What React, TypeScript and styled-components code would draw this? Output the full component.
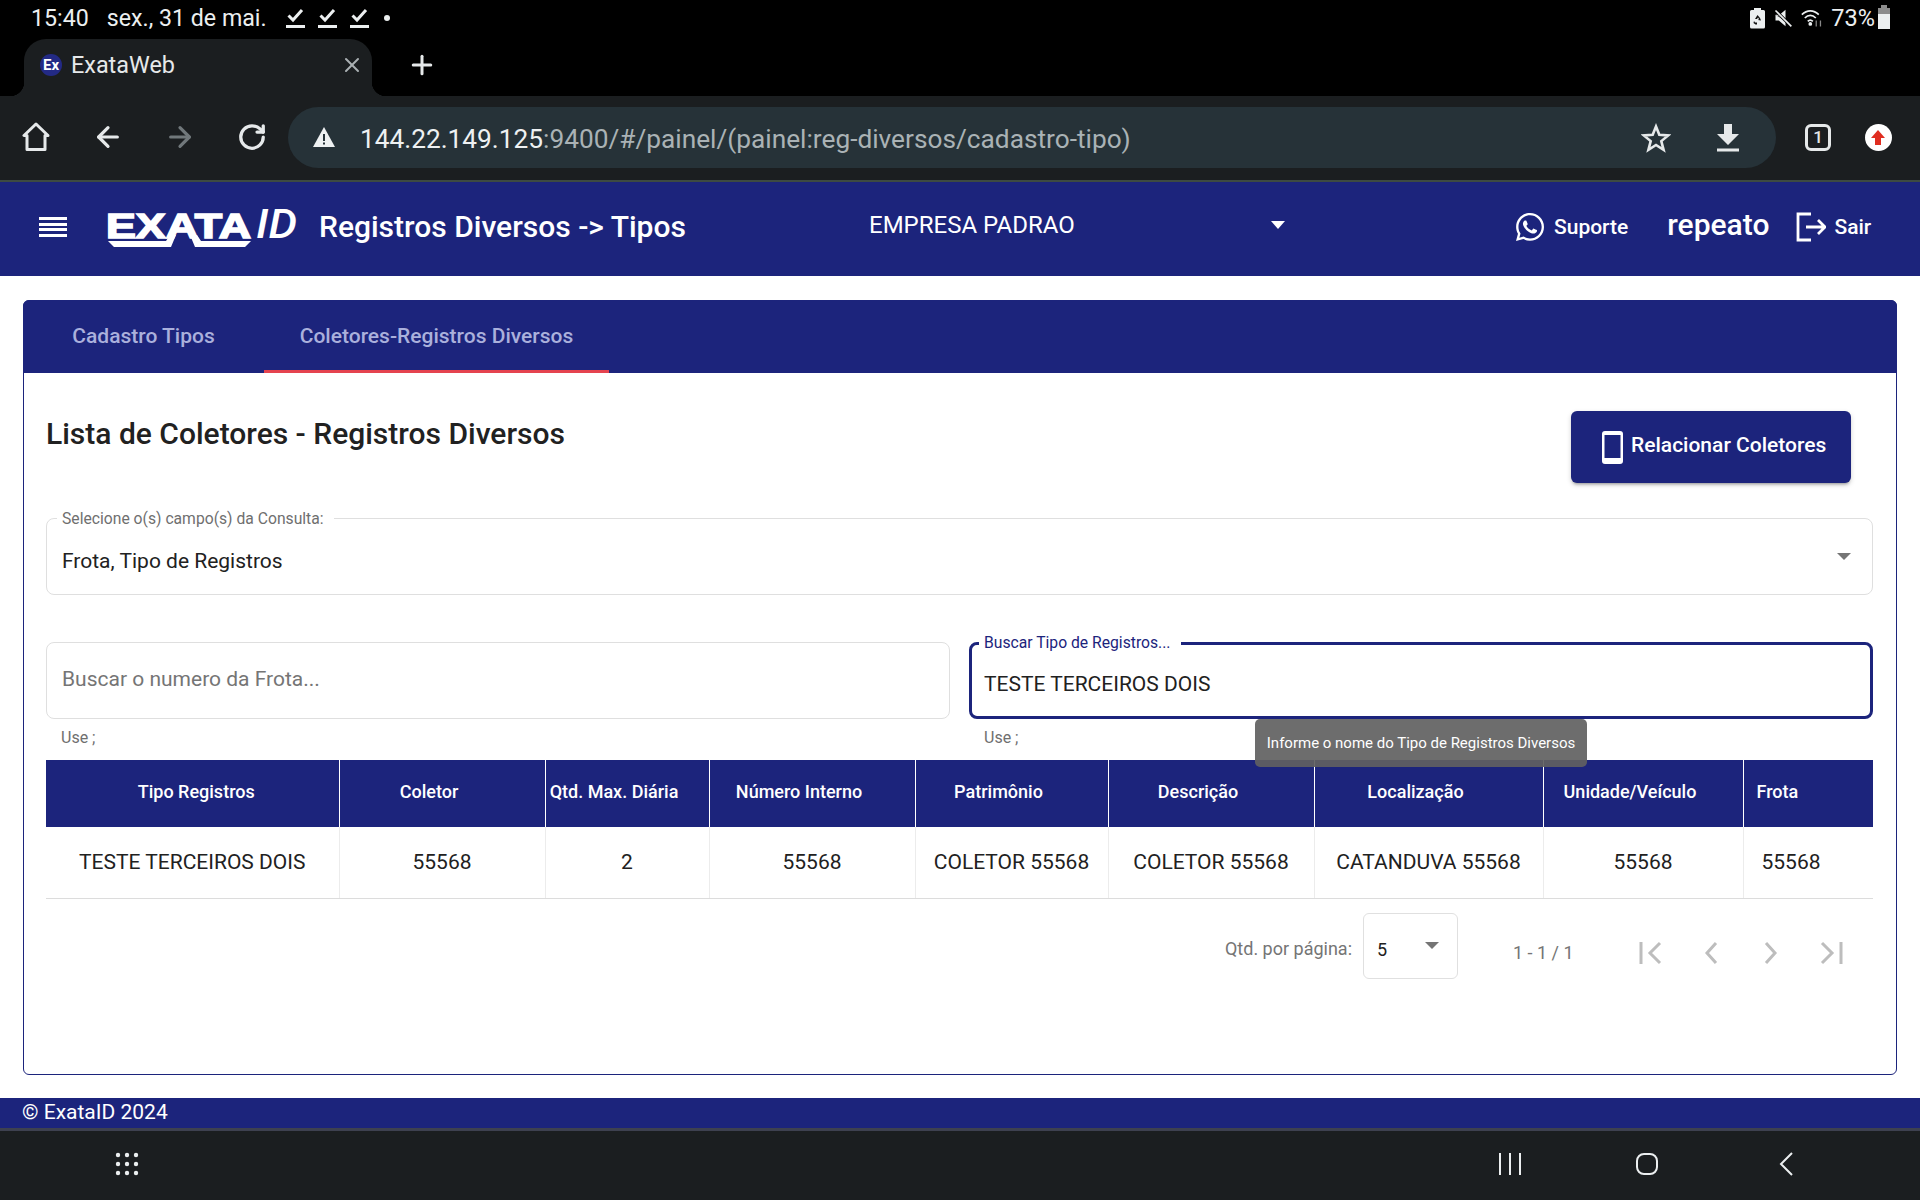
import React from "react";
import styled, { createGlobalStyle } from "styled-components";
import { FaWhatsapp } from "react-icons/fa";
import { ArrowLeft, ArrowRight, Plus, RotateCw, X } from "lucide-react";

const NAVY = "#1c247c";
const CHROME = "#1b1e20";

const GlobalStyle = createGlobalStyle`
  html, body {
    margin: 0;
    padding: 0;
    background: #fff;
    font-family: Roboto, "Liberation Sans", sans-serif;
  }
  * { box-sizing: border-box; }
`;

const Page = styled.div`
  width: 1920px;
  height: 1200px;
  display: flex;
  flex-direction: column;
  overflow: hidden;
`;

const StatusBar = styled.div`
  height: 39px;
  background: #000;
  color: #eceff0;
  display: flex;
  align-items: center;
  padding: 0 30px 4px 31px;
  font-size: 23.2px;
`;

const StatusDate = styled.span`
  margin: 0 19px 0 18px;
`;

const StatusChecks = styled.div`
  display: flex;
  align-items: center;
  gap: 13px;
`;

const StatusDot = styled.span`
  width: 6px;
  height: 6px;
  border-radius: 50%;
  background: #eceff0;
  margin-left: 15px;
`;

const StatusRight = styled.div`
  margin-left: auto;
  display: flex;
  align-items: center;
  gap: 8px;
`;

const StatusPercent = styled.span`
  font-size: 23.5px;
  margin-right: -5px;
`;

const TabStrip = styled.div`
  height: 57px;
  background: #000;
  display: flex;
  align-items: stretch;
  padding-left: 24px;
`;

const BrowserTab = styled.div`
  position: relative;
  width: 348px;
  background: ${CHROME};
  border-radius: 22px 22px 0 0;
  display: flex;
  align-items: center;
  padding: 0 8px 6px 16px;
  color: #e6e9ea;
  font-size: 23.4px;

  &::before,
  &::after {
    content: "";
    position: absolute;
    bottom: 0;
    width: 14px;
    height: 14px;
  }
  &::before {
    left: -14px;
    background: radial-gradient(circle at 0 0, #000 14px, ${CHROME} 14.5px);
  }
  &::after {
    right: -14px;
    background: radial-gradient(circle at 100% 0, #000 14px, ${CHROME} 14.5px);
  }
`;

const Favicon = styled.span`
  width: 22px;
  height: 22px;
  border-radius: 50%;
  background: #232a85;
  color: #fff;
  font-size: 15px;
  font-weight: 700;
  display: flex;
  align-items: center;
  justify-content: center;
  margin-right: 9px;
`;

const TabTitle = styled.span`
  flex: 1;
`;

const NewTab = styled.div`
  display: flex;
  align-items: center;
  margin: -6px 0 0 35px;
  color: #e6e9ea;
`;

const Toolbar = styled.div`
  height: 86px;
  background: ${CHROME};
  border-bottom: 2px solid #3d4a42;
  display: flex;
  align-items: center;
  padding-bottom: 2px;
`;

const ToolButton = styled.div<{ $width: number; $shift?: number }>`
  width: ${(p) => p.$width}px;
  padding-left: ${(p) => p.$shift ?? 0}px;
  display: flex;
  justify-content: center;
  align-items: center;
  flex-shrink: 0;
`;

const UrlPill = styled.div`
  width: 1488px;
  height: 61px;
  margin-left: 5px;
  border-radius: 31px;
  background: #263238;
  display: flex;
  align-items: center;
  padding: 0 36px 0 24px;
  font-size: 26.25px;
  color: #aab2b5;
`;

const UrlHost = styled.span`
  color: #eef1f2;
`;

const UrlText = styled.div`
  margin: 3px 0 0 24px;
  flex: 1;
  white-space: nowrap;
`;

const UrlActions = styled.div`
  display: flex;
  align-items: center;
  gap: 45px;
  margin-top: 1px;
`;

const TabCount = styled.div`
  width: 26px;
  height: 27px;
  border: 3px solid #e6e9ea;
  border-radius: 6px;
  color: #e6e9ea;
  font-size: 17px;
  font-weight: 500;
  display: flex;
  align-items: center;
  justify-content: center;
`;

const UpdateBadge = styled.div`
  width: 27px;
  height: 27px;
  margin-top: 1px;
  border-radius: 50%;
  background: #fff;
  display: flex;
  align-items: center;
  justify-content: center;
`;

const AppHeader = styled.header`
  height: 94px;
  background: ${NAVY};
  color: #fff;
  display: flex;
  align-items: center;
  padding: 0 0 4px 39px;
`;

const MenuIcon = styled.div`
  width: 28px;
  height: 20px;
  display: flex;
  flex-direction: column;
  justify-content: space-between;
  margin-right: 39px;

  span {
    height: 3px;
    background: #fff;
  }
`;

const LogoBox = styled.div`
  width: 190px;
  height: 52px;
  margin-right: 23px;
`;

const HeaderTitle = styled.div`
  width: 550px;
  margin-top: -1px;
  font-size: 30px;
  font-weight: 500;
`;

const CompanySelect = styled.div`
  width: 416px;
  display: flex;
  align-items: center;
  justify-content: space-between;
  font-size: 24px;
  margin-top: -4px;
`;

const HeaderLinks = styled.div`
  margin-left: 229px;
  display: flex;
  align-items: center;
`;

const HeaderLink = styled.div`
  display: flex;
  align-items: center;
  font-size: 21px;
  font-weight: 500;
  gap: 8px;
`;

const UserName = styled.div`
  font-size: 30px;
  font-weight: 500;
  margin: -6px 27px 0 39px;
`;

const Main = styled.main`
  flex: 1;
  background: #fff;
  padding: 24px 23px 23px;
  display: flex;
`;

const Card = styled.section`
  flex: 1;
  border: 1px solid ${NAVY};
  border-radius: 6px;
  display: flex;
  flex-direction: column;
`;

const TabBar = styled.div`
  height: 73px;
  margin: -1px -1px 0;
  background: ${NAVY};
  border-radius: 6px 6px 0 0;
  display: flex;
`;

const TabItem = styled.div<{ $active?: boolean; $width: number }>`
  width: ${(p) => p.$width}px;
  display: flex;
  align-items: center;
  justify-content: center;
  padding-top: 2px;
  border-bottom: 3px solid ${(p) => (p.$active ? "#e5434f" : "transparent")};
  color: #aab0dc;
  font-size: 21px;
  font-weight: 500;
`;

const CardBody = styled.div`
  padding: 38px 23px 0 22px;
  position: relative;
`;

const TitleRow = styled.div`
  height: 72px;
  display: flex;
  justify-content: space-between;
  padding-right: 22px;
`;

const Title = styled.h2`
  margin: 3px 0 0;
  font-size: 30px;
  line-height: 40px;
  font-weight: 500;
  color: #212121;
`;

const PrimaryButton = styled.button`
  width: 280px;
  height: 72px;
  border: 0;
  border-radius: 6px;
  background: ${NAVY};
  color: #fff;
  font-family: inherit;
  font-size: 21px;
  font-weight: 500;
  display: flex;
  align-items: center;
  padding: 0 0 0 31px;
  gap: 8px;
  box-shadow: 0 3px 3px -2px rgba(0, 0, 0, 0.3), 0 2px 5px rgba(0, 0, 0, 0.18);

  span {
    margin-top: -4px;
  }
`;

const Field = styled.div<{ $focused?: boolean; $mt: number }>`
  position: relative;
  height: 77px;
  margin-top: ${(p) => p.$mt}px;
  border: ${(p) => (p.$focused ? `3px solid ${NAVY}` : "1px solid #dfdfdf")};
  border-radius: 8px;
  display: flex;
  align-items: center;
  padding: ${(p) => (p.$focused ? "7px 12px 0" : "9px 15px 0")};
  font-size: 21px;
  color: #212121;
`;

const FieldLabel = styled.label<{ $focused?: boolean }>`
  position: absolute;
  top: ${(p) => (p.$focused ? -12 : -10)}px;
  left: ${(p) => (p.$focused ? 7 : 10)}px;
  background: #fff;
  padding: 0 10px 0 5px;
  font-size: 15.7px;
  line-height: 20px;
  color: ${(p) => (p.$focused ? NAVY : "#6f6f6f")};
`;

const Placeholder = styled.span`
  color: #757575;
  margin-top: -12px;
`;

const Caret = styled.span`
  margin-left: auto;
  margin-right: 6px;
  margin-top: -9px;
  width: 0;
  height: 0;
  border-left: 7px solid transparent;
  border-right: 7px solid transparent;
  border-top: 7px solid #757575;
`;

const SearchRow = styled.div`
  display: grid;
  grid-template-columns: 904px 904px;
  gap: 19px;
  align-items: start;
`;

const Hint = styled.div`
  font-size: 16px;
  line-height: 20px;
  color: #6f6f6f;
  margin: 9px 0 0 15px;
`;

const Tooltip = styled.div`
  position: absolute;
  left: 1231px;
  top: 346px;
  width: 332px;
  height: 48px;
  background: rgba(97, 97, 97, 0.92);
  border-radius: 5px;
  color: #fff;
  font-size: 15px;
  display: flex;
  align-items: center;
  justify-content: center;
`;

const Table = styled.table`
  width: 1827px;
  margin-top: 12px;
  border-collapse: collapse;
  table-layout: fixed;
`;

const Th = styled.th<{ $pl?: number; $pr?: number; $left?: boolean }>`
  height: 67px;
  background: ${NAVY};
  color: #fff;
  font-size: 18px;
  font-weight: 500;
  padding: 0 ${(p) => p.$pr ?? 26}px 4px ${(p) => p.$pl ?? 0}px;
  text-align: ${(p) => (p.$left ? "left" : "center")};
  border-left: 1px solid #fff;

  &:first-child {
    border-left: 0;
  }
`;

const Td = styled.td<{ $left?: boolean }>`
  height: 71px;
  font-size: 21px;
  color: #212121;
  padding: 0 0 0 ${(p) => (p.$left ? 18 : 0)}px;
  text-align: ${(p) => (p.$left ? "left" : "center")};
  border-left: 1px solid #ececec;
  border-bottom: 1px solid #dcdcdc;
  white-space: nowrap;

  &:first-child {
    border-left: 0;
  }
`;

const Pagination = styled.div`
  display: flex;
  align-items: center;
  justify-content: flex-end;
  margin-top: 14px;
  padding-right: 12px;
  color: #757575;
`;

const PageLabel = styled.span`
  font-size: 18px;
  margin-top: 6px;
  margin-right: 11px;
`;

const PageSelect = styled.div`
  width: 95px;
  height: 66px;
  border: 1px solid #e0e0e0;
  border-radius: 6px;
  display: flex;
  align-items: center;
  justify-content: space-between;
  padding: 7px 18px 0 13px;
  font-size: 18px;
  color: #212121;

  i {
    width: 0;
    height: 0;
    margin-top: -8px;
    border-left: 7px solid transparent;
    border-right: 7px solid transparent;
    border-top: 7px solid #757575;
  }
`;

const PageRange = styled.span`
  width: 108px;
  margin-left: 55px;
  font-size: 18px;
  margin-top: 14px;
`;

const PageButton = styled.div`
  width: 60px;
  display: flex;
  justify-content: center;
  margin-top: 15px;
`;

const Footer = styled.footer`
  height: 33px;
  background: ${NAVY};
  border-bottom: 3px solid #3e4150;
  color: #fff;
  font-size: 21px;
  line-height: 29px;
  padding-left: 22px;
`;

const NavBar = styled.div`
  height: 69px;
  background: ${CHROME};
  display: flex;
  align-items: center;
  padding: 0 0 3px 115px;
`;

const NavRight = styled.div`
  margin-left: auto;
  display: flex;
  align-items: center;
  margin-right: 127px;
  gap: 114px;
`;

const NavBack = styled.svg`
  margin-left: 6px;
`;

const CheckIcon = () => (
  <svg width="19" height="22" viewBox="0 0 19 22" fill="none">
    <path d="M2.5 8.5 7 13l9-10" stroke="#eceff0" strokeWidth="3" />
    <rect y="18" width="19" height="3" fill="#eceff0" />
  </svg>
);

const RecycleBatteryIcon = () => (
  <svg width="15" height="22" viewBox="0 0 15 22">
    <path d="M4 1h7v2h2.500a1.500 1.500 0 0 1 1.500 1.500V20a1.500 1.500 0 0 1-1.500 1.500h-12A1.500 1.500 0 0 1 0 20V4.500A1.500 1.500 0 0 1 1.500 3H4z" fill="#eceff0" />
    <path d="M7.500 8 5 12h2l1-1.500 1 1.500-1 1 3 .5L10 11zM4 14l-.5 2 2 1.500H7v-2H5z" fill="#111" />
  </svg>
);

const MuteIcon = () => (
  <svg width="20" height="22" viewBox="0 0 24 24" fill="#eceff0">
    <path d="M3 8h5l7-6v12zM3 8v7h4l8 7v-6z" />
    <path d="M2 2l20 20" stroke="#000" strokeWidth="4" />
    <path d="M3 3l19 19" stroke="#eceff0" strokeWidth="2" />
  </svg>
);

const WifiIcon = () => (
  <svg width="22" height="20" viewBox="0 0 26 22" fill="none" stroke="#eceff0" strokeWidth="2">
    <path d="M1 7c6-6 14-6 20 0M4.500 11c4-4 9-4 13 0M8 15c2-2 4-2 6 0" />
    <circle cx="11" cy="18" r="1.200" fill="#eceff0" />
    <path d="M18 14v7M23 14v7" stroke="#888" strokeWidth="1.500" />
  </svg>
);

const BatteryIcon = () => (
  <svg width="12" height="25" viewBox="0 0 12 25">
    <rect x="3" y="0" width="6" height="3" fill="#8c8c8c" />
    <rect x="0" y="3" width="12" height="6" fill="#8c8c8c" />
    <rect x="0" y="9" width="12" height="15" fill="#eceff0" />
  </svg>
);

const HomeIcon = () => (
  <svg width="28" height="30" viewBox="0 0 28 30" fill="none" stroke="#e6e9ea" strokeWidth="3" strokeLinejoin="round">
    <path d="M14 2 2 13.500h3V27.500h18V13.500h3z" />
  </svg>
);

const WarningIcon = () => (
  <svg width="24" height="22" viewBox="0 0 24 22">
    <path d="M12 1 23 21H1z" fill="#eef1f2" />
    <path d="M11 8h2v7h-2zM11 16.500h2v2h-2z" fill="#263238" />
  </svg>
);

const StarIcon = () => (
  <svg width="30" height="30" viewBox="0 0 30 30" fill="none" stroke="#e6e9ea" strokeWidth="2.600" strokeLinejoin="miter">
    <path d="M15 3.500l3.300 8.300 8.900.6-6.900 5.700 2.300 8.700-7.600-4.800-7.600 4.800 2.300-8.700-6.900-5.700 8.900-.6z" />
  </svg>
);

const DownloadIcon = () => (
  <svg width="24" height="28" viewBox="0 0 24 28" fill="#e6e9ea">
    <path d="M8 0h8v10h7L12 21 1 10h7z" />
    <rect x="1" y="24.500" width="22" height="3" />
  </svg>
);

const UploadArrow = () => (
  <svg width="14" height="16" viewBox="0 0 14 16">
    <path d="M7 0l7 8h-4v7H4V8H0z" fill="#e02d20" />
  </svg>
);

const ExataLogo = () => (
  <svg width="192" height="52" viewBox="0 0 192 52">
    <text
      x="0"
      y="37"
      fill="#fff"
      stroke="#fff"
      strokeWidth="1.600"
      fontFamily="Liberation Sans, sans-serif"
      fontWeight="700"
      fontSize="35"
      textLength="145"
      lengthAdjust="spacingAndGlyphs"
    >
      EXATA
    </text>
    <text
      x="150"
      y="37"
      fill="#fff"
      fontFamily="Roboto, sans-serif"
      fontStyle="italic"
      fontWeight="500"
      fontSize="40"
      textLength="41"
      lengthAdjust="spacingAndGlyphs"
    >
      ID
    </text>
    <path d="M2 40H60L64 34H70L65 46H8zM84 34h7l4 6h50l-6 6H89z" fill="#fff" />
  </svg>
);

const LogoutIcon = () => (
  <svg width="30" height="30" viewBox="0 0 30 30" fill="none" stroke="#fff" strokeWidth="2.800">
    <path d="M15 2H2v26h13M10 15h19M22 8l7 7-7 7" />
  </svg>
);

const PhoneIcon = () => (
  <svg width="21" height="33" viewBox="0 0 21 33">
    <rect x="0" y="0" width="21" height="33" rx="3" fill="#fff" />
    <rect x="2.500" y="4" width="16" height="23" fill={NAVY} />
  </svg>
);

const PagerIcon = ({ d }: { d: string }) => (
  <svg width="26" height="26" viewBox="0 0 26 26" fill="none" stroke="#bdbdbd" strokeWidth="3">
    <path d={d} />
  </svg>
);

const columns = [
  { label: "Tipo Registros", width: 293, value: "TESTE TERCEIROS DOIS", pl: 8, pr: 0 },
  { label: "Coletor", width: 206, value: "55568" },
  { label: "Qtd. Max. Diária", width: 164, value: "2", pr: 26 },
  { label: "Número Interno", width: 206, value: "55568" },
  { label: "Patrimônio", width: 193, value: "COLETOR 55568" },
  { label: "Descrição", width: 206, value: "COLETOR 55568" },
  { label: "Localização", width: 229, value: "CATANDUVA 55568" },
  { label: "Unidade/Veículo", width: 200, value: "55568" },
  { label: "Frota", width: 130, value: "55568", left: true },
];

const App = () => {
  return (
    <Page>
      <GlobalStyle />
      <StatusBar>
        <span>15:40</span>
        <StatusDate>sex., 31 de mai.</StatusDate>
        <StatusChecks>
          <CheckIcon />
          <CheckIcon />
          <CheckIcon />
        </StatusChecks>
        <StatusDot />
        <StatusRight>
          <RecycleBatteryIcon />
          <MuteIcon />
          <WifiIcon />
          <StatusPercent>73%</StatusPercent>
          <BatteryIcon />
        </StatusRight>
      </StatusBar>

      <TabStrip>
        <BrowserTab>
          <Favicon>Ex</Favicon>
          <TabTitle>ExataWeb</TabTitle>
          <X size={24} color="#aab0b3" strokeWidth={2} />
        </BrowserTab>
        <NewTab>
          <Plus size={30} strokeWidth={2.4} />
        </NewTab>
      </TabStrip>

      <Toolbar>
        <ToolButton $width={72}>
          <HomeIcon />
        </ToolButton>
        <ToolButton $width={72}>
          <ArrowLeft size={32} color="#e6e9ea" strokeWidth={2.4} />
        </ToolButton>
        <ToolButton $width={72}>
          <ArrowRight size={32} color="#71787b" strokeWidth={2.4} />
        </ToolButton>
        <ToolButton $width={67} $shift={5}>
          <RotateCw size={30} color="#e6e9ea" strokeWidth={2.6} />
        </ToolButton>
        <UrlPill>
          <WarningIcon />
          <UrlText>
            <UrlHost>144.22.149.125</UrlHost>:9400/#/painel/(painel:reg-diversos/cadastro-tipo)
          </UrlText>
          <UrlActions>
            <StarIcon />
            <DownloadIcon />
          </UrlActions>
        </UrlPill>
        <ToolButton $width={84}>
          <TabCount>1</TabCount>
        </ToolButton>
        <ToolButton $width={36}>
          <UpdateBadge>
            <UploadArrow />
          </UpdateBadge>
        </ToolButton>
      </Toolbar>

      <AppHeader>
        <MenuIcon>
          <span />
          <span />
          <span />
          <span />
        </MenuIcon>
        <LogoBox>
          <ExataLogo />
        </LogoBox>
        <HeaderTitle>Registros Diversos -&gt; Tipos</HeaderTitle>
        <CompanySelect>
          <span>EMPRESA PADRAO</span>
          <svg width="14" height="8" viewBox="0 0 14 8">
            <path d="M0 0h14L7 8z" fill="#fff" />
          </svg>
        </CompanySelect>
        <HeaderLinks>
          <HeaderLink>
            <FaWhatsapp size={32} />
            Suporte
          </HeaderLink>
          <UserName>repeato</UserName>
          <HeaderLink>
            <LogoutIcon />
            Sair
          </HeaderLink>
        </HeaderLinks>
      </AppHeader>

      <Main>
        <Card>
          <TabBar>
            <TabItem $width={241}>Cadastro Tipos</TabItem>
            <TabItem $width={345} $active>
              Coletores-Registros Diversos
            </TabItem>
          </TabBar>
          <CardBody>
            <TitleRow>
              <Title>Lista de Coletores - Registros Diversos</Title>
              <PrimaryButton>
                <PhoneIcon />
                <span>Relacionar Coletores</span>
              </PrimaryButton>
            </TitleRow>

            <Field $mt={35}>
              <FieldLabel>Selecione o(s) campo(s) da Consulta:</FieldLabel>
              <span>Frota, Tipo de Registros</span>
              <Caret />
            </Field>

            <SearchRow>
              <div>
                <Field $mt={47}>
                  <Placeholder>Buscar o numero da Frota...</Placeholder>
                </Field>
                <Hint>Use ;</Hint>
              </div>
              <div>
                <Field $mt={47} $focused>
                  <FieldLabel $focused>Buscar Tipo de Registros...</FieldLabel>
                  <span>TESTE TERCEIROS DOIS</span>
                </Field>
                <Hint>Use ;</Hint>
              </div>
            </SearchRow>

            <Tooltip>Informe o nome do Tipo de Registros Diversos</Tooltip>

            <Table>
              <colgroup>
                {columns.map((column) => (
                  <col key={column.label} width={column.width} />
                ))}
              </colgroup>
              <thead>
                <tr>
                  {columns.map((column) => (
                    <Th
                      key={column.label}
                      $pl={column.left ? 13 : column.pl}
                      $pr={column.left ? 0 : column.pr}
                      $left={column.left}
                    >
                      {column.label}
                    </Th>
                  ))}
                </tr>
              </thead>
              <tbody>
                <tr>
                  {columns.map((column) => (
                    <Td key={column.label} $left={column.left}>
                      {column.value}
                    </Td>
                  ))}
                </tr>
              </tbody>
            </Table>

            <Pagination>
              <PageLabel>Qtd. por página:</PageLabel>
              <PageSelect>
                <span>5</span>
                <i />
              </PageSelect>
              <PageRange>1 - 1 / 1</PageRange>
              <PageButton>
                <PagerIcon d="M3 2v22M22 3l-10 10 10 10" />
              </PageButton>
              <PageButton>
                <PagerIcon d="M18 3l-9 10 9 10" />
              </PageButton>
              <PageButton>
                <PagerIcon d="M8 3l9 10-9 10" />
              </PageButton>
              <PageButton>
                <PagerIcon d="M23 2v22M4 3l10 10-10 10" />
              </PageButton>
            </Pagination>
          </CardBody>
        </Card>
      </Main>

      <Footer>© ExataID 2024</Footer>

      <NavBar>
        <svg width="24" height="24" viewBox="0 0 24 24" fill="#eceff0">
          {[3, 12, 21].map((cy) =>
            [3, 12, 21].map((cx) => <circle key={`${cx}-${cy}`} cx={cx} cy={cy} r="2.200" />)
          )}
        </svg>
        <NavRight>
          <svg width="22" height="24" viewBox="0 0 22 24" fill="#eceff0">
            <rect x="0" y="1" width="2" height="22" />
            <rect x="10" y="1" width="2" height="22" />
            <rect x="20" y="1" width="2" height="22" />
          </svg>
          <svg width="24" height="24" viewBox="0 0 24 24" fill="none" stroke="#eceff0" strokeWidth="2">
            <rect x="2" y="2" width="20" height="20" rx="7" />
          </svg>
          <NavBack width="14" height="26" viewBox="0 0 14 26" fill="none" stroke="#eceff0" strokeWidth="2">
            <path d="M13 2 2 13l11 11" />
          </NavBack>
        </NavRight>
      </NavBar>
    </Page>
  );
};

export default App;
